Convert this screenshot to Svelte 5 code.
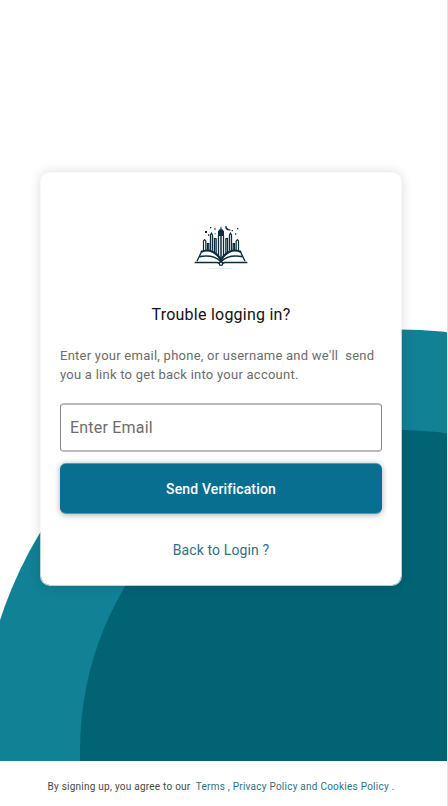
<script>
  let email = $state('');
</script>

<div class="page">
  <main>
    <svg class="waves" width="447" height="761" viewBox="0 0 447 761" aria-hidden="true">
      <circle cx="400" cy="750" r="420.5" fill="#118195" />
      <circle cx="400" cy="750" r="320" fill="#026374" />
    </svg>
    <form class="card" onsubmit={(e) => e.preventDefault()}>
      <svg class="logo" width="56" height="50" viewBox="0 0 168 150" fill="none" stroke="#0b2c3d" aria-hidden="true">
        <ellipse cx="84" cy="139" rx="40" ry="1.500" fill="#dbe7ee" stroke="none" />
        <path d="M5 121.500H74l5 3h10l5-3h69" stroke-width="4.500" />
        <path d="M27 86L12 118M141 86l15 32" stroke-width="4" />
        <path d="M24 90C48 78 72 92 84 114 96 92 120 78 144 90" stroke-width="6.500" />
        <path d="M19 104c27-5 50 0 65 15 15-15 38-20 65-15" stroke-width="5" />
        <circle cx="84" cy="125" r="5" fill="#fff" stroke-width="4" />
        <path d="M31.500 86V57l3-4 4 4v27M43.500 84V64.500h4V84" stroke-width="3.600" />
        <path d="M52.500 86V39l3-5 3 5v47M64.500 92V49.500l5 1v45" stroke-width="3.800" />
        <path d="M76.500 105V39M91.500 105V39" stroke-width="3.800" />
        <path d="M84 110V28" stroke-width="4.500" />
        <path d="M98.500 95V50.500l5-1V92M109.500 86V39l3-5 3 5v47" stroke-width="3.800" />
        <path d="M120.500 84V64.500h4V84M129.500 84V57l4-4 3 4v29" stroke-width="3.600" />
        <path d="M75 42V28l5-6h2l1-8h2l1 8h2l5 6v14z" fill="#0b2c3d" stroke="none" />
        <path d="M99 12c-3 5 0 14 13 12-7-1-11-6-13-12z" fill="#0b2c3d" stroke-width="2" />
        <path d="M36 27h6v6h-6zM51 15h4v4h-4zM64 19h4v4h-4zM45 37h4v4h-4zM65 34h3v3h-3zM116 24h4v4h-4zM132 18h4v4h-4zM126 34h4v4h-4z" fill="#0b2c3d" stroke="none" />
      </svg>
      <h1>Trouble logging in?</h1>
      <p class="hint">Enter your email, phone, or username and we'll&nbsp; send you a link to get back into your account.</p>
      <input type="text" placeholder="Enter Email" bind:value={email} />
      <button type="submit">Send Verification</button>
      <a class="back" href="#login">Back to Login ?</a>
    </form>
  </main>
  <footer>By signing up, you agree to our&nbsp; <a href="#terms">Terms , Privacy Policy and Cookies Policy .</a></footer>
</div>

<style>
  .page {
    box-sizing: border-box;
    width: 448px;
    height: 806px;
    border-right: 1px solid #e4e4e4;
    background: #fff;
    font-family: Roboto, sans-serif;
    overflow: hidden;
  }
  main {
    position: relative;
    box-sizing: border-box;
    height: 761px;
    padding: 172px 45px 0 40px;
    overflow: hidden;
  }
  .waves {
    position: absolute;
    inset: 0;
  }
  .card {
    position: relative;
    box-sizing: border-box;
    height: 414px;
    padding: 49px 19px 0;
    display: flex;
    flex-direction: column;
    align-items: center;
    background: #fff padding-box;
    border: 1px solid rgba(255, 255, 255, 0.7);
    border-radius: 10px;
    box-shadow: 0 0 12px rgba(0, 0, 0, 0.14);
  }
  .logo {
    flex: none;
  }
  h1 {
    margin: 33px 0 0;
    font-size: 16px;
    line-height: 20px;
    font-weight: 400;
    letter-spacing: 0.24px;
    color: #111;
    white-space: nowrap;
  }
  .hint {
    align-self: stretch;
    margin: 21px 0 0;
    font-size: 13px;
    line-height: 19px;
    letter-spacing: 0.25px;
    color: #6c6c6c;
  }
  input {
    box-sizing: border-box;
    width: 322px;
    height: 49px;
    flex: none;
    margin: 19px 0 0;
    padding: 0 9px;
    border: solid;
    border-width: 2px 1px;
    border-color: #b9b9c0 #85858d;
    border-radius: 4px;
    background: #fff;
    font: 400 16px Roboto, sans-serif;
    letter-spacing: 0.2px;
    outline: none;
  }
  input::placeholder {
    color: #6c6c6c;
    opacity: 1;
  }
  button {
    box-sizing: border-box;
    width: 322px;
    height: 51px;
    flex: none;
    margin: 11px 0 0;
    padding: 1px 0 0;
    border: solid rgba(255, 255, 255, 0.3);
    border-width: 1px 0;
    border-radius: 6px;
    background: #086f91;
    box-shadow: 0 1px 6px rgba(0, 0, 0, 0.32);
    color: #fff;
    font: 500 14px Roboto, sans-serif;
    letter-spacing: 0.16px;
  }
  a {
    color: #2f7085;
    text-decoration: none;
  }
  .back {
    margin-top: 26px;
    font-size: 14px;
    line-height: 20px;
    letter-spacing: 0.12px;
  }
  footer {
    height: 45px;
    padding-top: 16px;
    box-sizing: border-box;
    padding-right: 5px;
    text-align: center;
    font-size: 10px;
    line-height: 20px;
    letter-spacing: 0.24px;
    color: #484848;
    white-space: nowrap;
  }
</style>
